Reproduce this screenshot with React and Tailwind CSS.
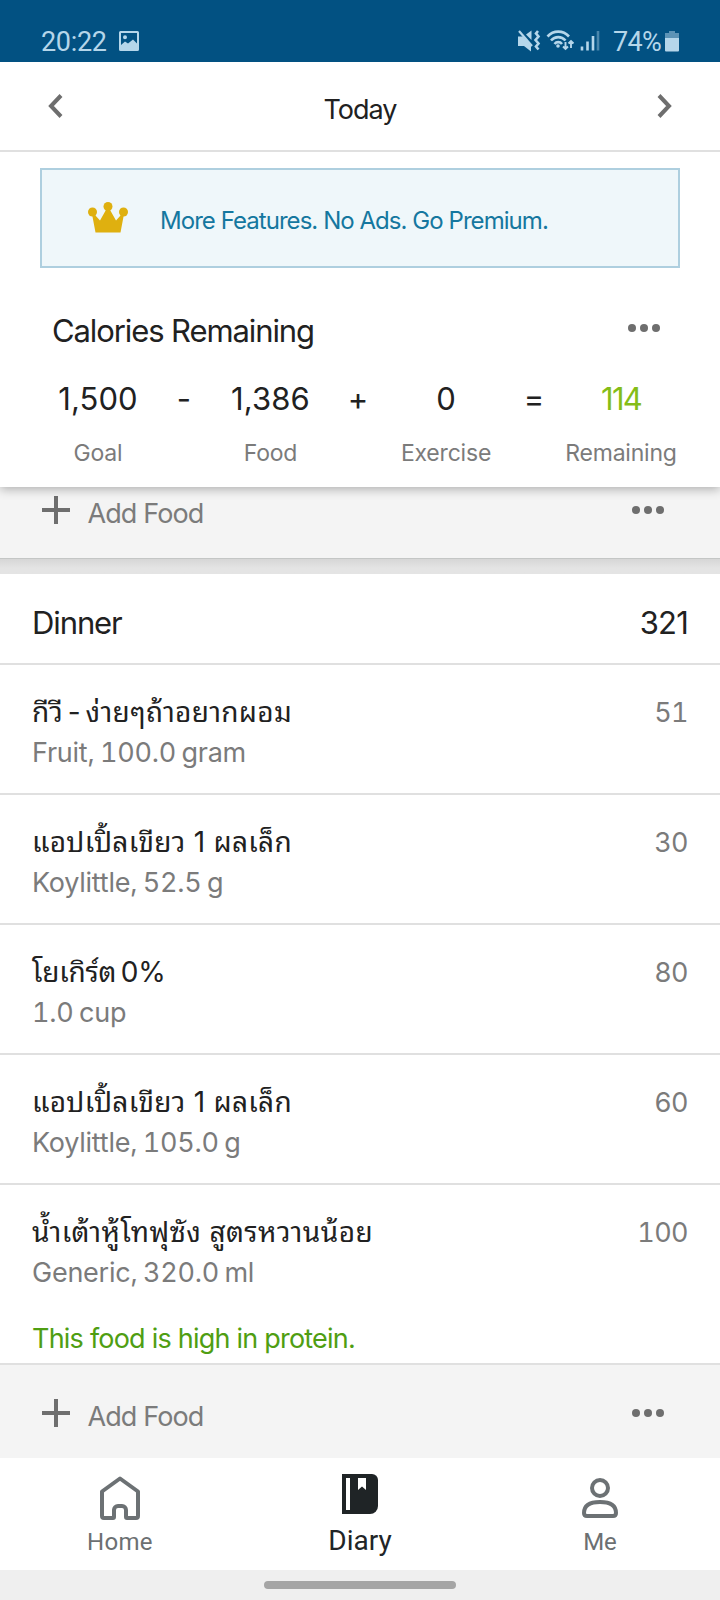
const meals = [
  {
    name: 'กีวี - ง่ายๆถ้าอยากผอม',
    detail: 'Fruit, 100.0 gram',
    calories: 51,
    spacing: 'tracking-[0.32px] [word-spacing:-3.5px]',
  },
  {
    name: 'แอปเปิ้ลเขียว 1 ผลเล็ก',
    detail: 'Koylittle, 52.5 g',
    calories: 30,
    spacing: 'tracking-[0.3px]',
  },
  {
    name: 'โยเกิร์ต 0%',
    detail: '1.0 cup',
    calories: 80,
    spacing: 'tracking-[-0.2px] [word-spacing:-3px]',
  },
  {
    name: 'แอปเปิ้ลเขียว 1 ผลเล็ก',
    detail: 'Koylittle, 105.0 g',
    calories: 60,
    spacing: 'tracking-[0.3px]',
  },
  {
    name: 'น้ำเต้าหู้โทฟุซัง สูตรหวานน้อย',
    detail: 'Generic, 320.0 ml',
    calories: 100,
    spacing: 'tracking-[0.45px]',
    note: 'This food is high in protein.',
  },
];

const totals = [
  { value: '1,500', label: 'Goal' },
  { value: '-' },
  { value: '1,386', label: 'Food' },
  { value: '+' },
  { value: '0', label: 'Exercise' },
  { value: '=' },
  { value: '114', label: 'Remaining', highlight: true },
];

function Dots() {
  return (
    <svg width="32" height="8" viewBox="0 0 32 8" fill="#6e6e6e">
      <circle cx="4" cy="4" r="4" />
      <circle cx="16" cy="4" r="4" />
      <circle cx="28" cy="4" r="4" />
    </svg>
  );
}

function StatusBar() {
  return (
    <div className="flex h-[62px] items-start justify-between bg-[#025182] pr-[41px] pl-[41px] pt-[26px] font-['Roboto',sans-serif] text-[27px] leading-8 text-[#b5d6ea]">
      <div className="flex items-center">
        <span className="w-[78px] tracking-[-0.3px]">20:22</span>
        <svg className="-mt-0.5" width="20" height="20" viewBox="0 0 20 20">
          <path
            fill="currentColor"
            fillRule="evenodd"
            d="M1.500 0h17A1.500 1.500 0 0 1 20 1.500v17a1.500 1.500 0 0 1-1.500 1.500h-17A1.500 1.500 0 0 1 0 18.500v-17A1.500 1.500 0 0 1 1.500 0zM2 2v12l4-3.500 3 2 5-4 4 4V2zM6 4.200a2 2 0 1 1 0 4 2 2 0 0 1 0-4z"
          />
        </svg>
      </div>
      <div className="flex items-center">
        <svg className="-mt-0.5" width="84" height="24" viewBox="0 0 84 24">
          <g fill="currentColor">
            <path d="M1 7.500h5L14 16v6.500L7 17H1z" />
            <path d="M9 5.500L14.500 1.500V11z" />
          </g>
          <g fill="none" stroke="currentColor">
            <path strokeWidth="2.200" d="M2 2l13 15" />
            <path strokeWidth="2.600" d="M21 2l-2 2.500 2.500 3-3 3.500 3 3.500-2.500 3 2.500 3" />
            <path strokeWidth="2.600" d="M30.500 7.500c6-6.500 15.500-6.500 21.500 0M34 11.500c4-4.500 10.500-4.500 14.500 0M37.500 15c2-2.500 5.500-2.500 7.500 0" />
            <path strokeWidth="1.900" d="M48.500 13v7M46 17.500l2.500 2.500 2.500-2.500M54 19v-7M51.500 14.500l2.500-2.500 2.500 2.500" />
            <path strokeWidth="2.600" d="M65 21.500v-4M70.500 21.500v-9M76 21.500V7" />
            <path strokeWidth="2.600" opacity=".4" d="M81 21.500V2" />
          </g>
          <circle cx="41" cy="17" r="1.800" fill="currentColor" />
        </svg>
        <span className="ml-3 w-[52px] tracking-[-0.7px]">74%</span>
        <svg className="-mt-0.5" width="14" height="21" viewBox="0 0 14 21" fill="currentColor">
          <path opacity=".5" d="M4 0h6v2h4v5H0V2h4z" />
          <path d="M0 7h14v12.500a1 1 0 0 1-1 1H1a1 1 0 0 1-1-1z" />
        </svg>
      </div>
    </div>
  );
}

function DateHeader() {
  return (
    <div className="flex h-[90px] items-center justify-between border-b-2 border-[#e0e0e0] pr-[48px] pl-[48px]">
      <svg className="-mt-px" width="15" height="24" viewBox="0 0 15 24" fill="none" stroke="#6e6e6e" strokeWidth="4">
        <path d="M13 1.500L3 12l10 10.500" />
      </svg>
      <h1 className="pt-2 text-[27px] leading-8 tracking-[-1px]">Today</h1>
      <svg className="-mt-px" width="15" height="24" viewBox="0 0 15 24" fill="none" stroke="#6e6e6e" strokeWidth="4">
        <path d="M2 1.500L12 12 2 22.500" />
      </svg>
    </div>
  );
}

function PremiumBanner() {
  return (
    <div className="mx-10 mt-4 flex h-[100px] items-center border-2 border-[#aecfdf] bg-[#eff7fa] pl-[46px]">
      <svg className="-mt-px" width="40" height="31" viewBox="0 0 40 31" fill="#dfb00f">
        <circle cx="4.500" cy="10" r="4.500" />
        <circle cx="20" cy="4.500" r="4.500" />
        <circle cx="35.500" cy="10" r="4.500" />
        <path d="M4 12l3 1 5 5.500L18.500 7h3L28 18.500l5-5.500 3-1-3.500 18.500h-25z" />
      </svg>
      <span className="ml-8 pt-[5px] text-2xl leading-8 tracking-[-0.95px] text-[#15779f]">
        More Features. No Ads. Go Premium.
      </span>
    </div>
  );
}

function CalorieSummary() {
  return (
    <div className="relative z-10 h-[219px] bg-white shadow-[0_2px_10px_rgba(0,0,0,0.3)] [clip-path:inset(0_0_-20px_0)]">
      <div className="flex items-center justify-between pt-[43px] pr-[60px] pl-[52px]">
        <h2 className="text-[31px] leading-10 tracking-[-1.1px]">Calories Remaining</h2>
        <div className="pb-1.5">
          <Dots />
        </div>
      </div>
      <div className="mt-7 ml-[55px] grid grid-cols-[86px_86px_87px_88px_88px_88px_86px]">
        {totals.map((item) => (
          <div key={item.value} className="flex flex-col items-center whitespace-nowrap">
            <span
              className={`text-[31px] leading-10 ${item.highlight ? 'tracking-[-1.8px] text-[#84bd17]' : 'tracking-[0.1px]'}`}
            >
              {item.value}
            </span>
            {item.label && (
              <span className="mt-[18px] text-[23px] leading-8 tracking-[-0.2px] text-[#7b7b7b]">{item.label}</span>
            )}
          </div>
        ))}
      </div>
    </div>
  );
}

function AddFood() {
  return (
    <div className="flex h-[46px] items-center pr-[56px] pl-[42px] text-[#7b7b7b]">
      <svg width="28" height="28" viewBox="0 0 28 28" fill="none" stroke="#6e6e6e" strokeWidth="4">
        <path d="M14 0v28M0 14h28" />
      </svg>
      <span className="ml-[17.5px] flex-1 pt-[7px] text-[27px] leading-8 tracking-[-0.9px]">Add Food</span>
      <Dots />
    </div>
  );
}

function FoodRow({ item }) {
  return (
    <div className="border-b-2 border-[#e0e0e0] px-8 pt-[28px] last:border-b-0">
      <div className={item.note ? 'h-[150px]' : 'h-[100px]'}>
        <div className="flex h-10 justify-between text-[27px] leading-10">
          <span className={`text-[28px] leading-[38px] ${item.spacing}`}>{item.name}</span>
          <span className="tracking-[-0.6px] text-[#7b7b7b] tabular-nums">{item.calories}</span>
        </div>
        <p className="text-[27px] leading-10 tracking-[-0.25px] text-[#7b7b7b] tabular-nums [word-spacing:-1.5px]">
          {item.detail}
        </p>
        {item.note && (
          <p className="mt-[26px] text-[27px] leading-10 tracking-[-0.78px] text-[#4f9e12]">{item.note}</p>
        )}
      </div>
    </div>
  );
}

function BottomNav() {
  return (
    <nav className="flex h-[112px] justify-between bg-white px-[60px] font-['Roboto',sans-serif] text-2xl text-[#6c7072]">
      <div className="flex w-[120px] flex-col items-center pt-[18px]">
        <svg width="40" height="44" viewBox="0 0 40 44" fill="none" stroke="#6c7174" strokeWidth="4" strokeLinejoin="round">
          <path d="M2 15.500L20 2.500 38 15.500V40a2 2 0 0 1-2 2h-9a1 1 0 0 1-1-1v-7a4 4 0 0 0-4-4h-4a4 4 0 0 0-4 4v7a1 1 0 0 1-1 1H4a2 2 0 0 1-2-2z" transform="translate(0 0)" />
        </svg>
        <span className="mt-[6px] leading-8 tracking-[0.3px]">Home</span>
      </div>
      <div className="flex w-[120px] flex-col items-center pt-4 text-[#212527]">
        <svg width="36" height="40" viewBox="0 0 36 40">
          <path fill="#1f2426" d="M0 0h30a6 6 0 0 1 6 6v26a8 8 0 0 1-8 8H0z" />
          <path fill="#fff" d="M4 4h4v32H4zM16 4h8v12l-4-3.500-4 3.500z" />
        </svg>
        <span className="mt-[11px] text-[28px] leading-8">Diary</span>
      </div>
      <div className="flex w-[120px] flex-col items-center pt-5">
        <svg width="36" height="40" viewBox="0 0 36 40" fill="none" stroke="#6c7174" strokeWidth="4">
          <circle cx="18" cy="10" r="8" />
          <path d="M2 35c0-8 7-11 16-11s16 3 16 11q0 3-3 3H5q-3 0-3-3z" />
        </svg>
        <span className="mt-2 leading-8">Me</span>
      </div>
    </nav>
  );
}

export default function App() {
  return (
    <div className="flex h-[1600px] w-[720px] flex-col overflow-hidden bg-white font-['Inter','Noto_Sans_Thai_Looped','Noto_Sans_Thai','Noto_Sans',sans-serif] text-[#212121]">
      <StatusBar />
      <DateHeader />
      <PremiumBanner />
      <CalorieSummary />
      <div className="h-[71px] bg-[#f4f4f4]">
        <AddFood />
      </div>
      <div className="h-4 border-t border-[#c4c6c5] bg-linear-to-b from-[#d6d6d6] to-[#e4e4e4] to-60%" />
      <div className="flex h-[91px] items-center justify-between border-b-2 border-[#e0e0e0] px-8 pt-[9px] text-[31px] tracking-[-1.1px]">
        <h2>Dinner</h2>
        <span className="tracking-[-0.8px]">321</span>
      </div>
      <div>
        {meals.map((item, index) => (
          <FoodRow key={index} item={item} />
        ))}
      </div>
      <div className="h-[95px] border-t-2 border-[#e0e0e0] bg-[#f4f4f4] pt-[25px]">
        <AddFood />
      </div>
      <BottomNav />
      <div className="flex h-[30px] justify-center bg-[#efefef] pt-[11px]">
        <div className="h-2 w-48 rounded-full bg-[#a5a5a5]" />
      </div>
    </div>
  );
}
